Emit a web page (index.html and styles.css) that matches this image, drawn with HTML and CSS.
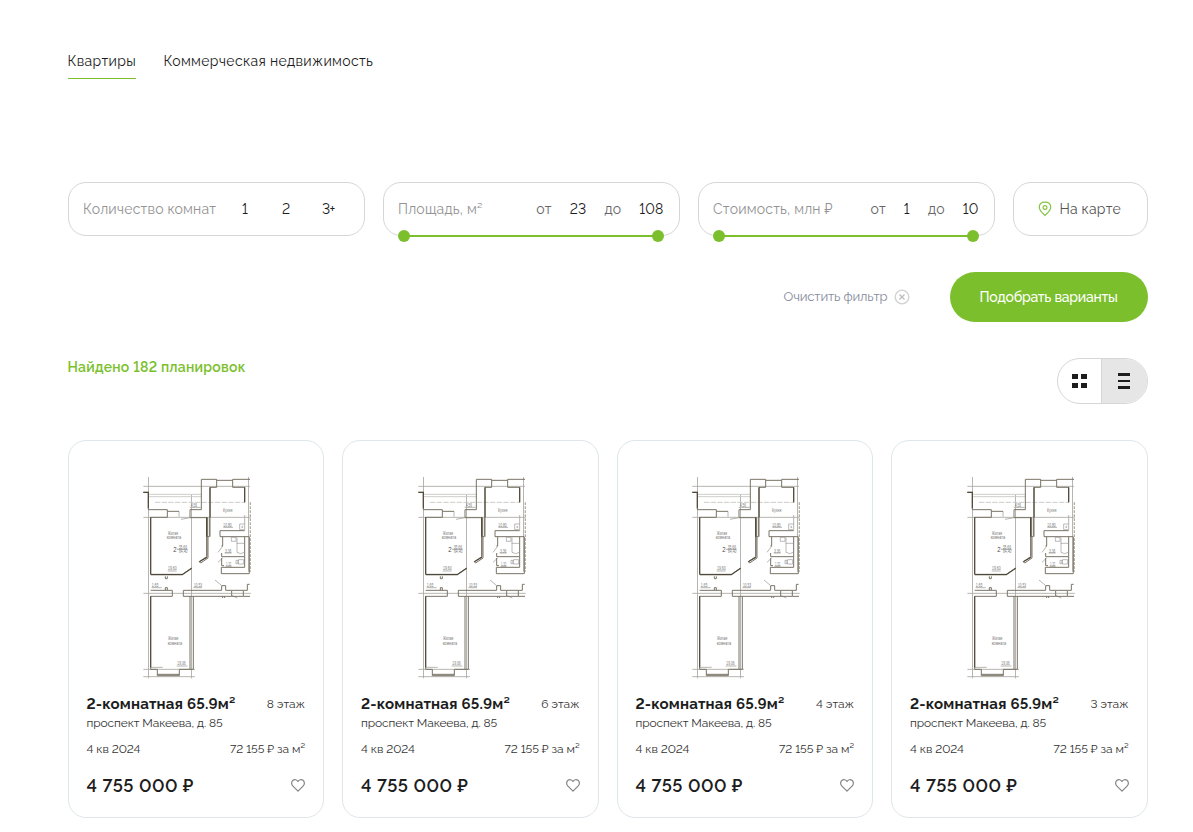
FILE: index.html
```html
<!DOCTYPE html>
<html lang="ru">
<head>
<meta charset="utf-8">
<title>Квартиры</title>
<link rel="stylesheet" href="styles.css">
</head>
<body>
<svg class="sprite" aria-hidden="true">
  <symbol id="plan" viewBox="0 0 405 660">
    <g fill="none" stroke="#aaa9a5" stroke-width="2.6">
      <path d="M55.5 36V640M184.500 89V640M355.500 36V320M40 64H360M40 157H362M40 385H362M40 613H195M40 635H195"/>
      <path d="M75 112H345" stroke="#c4c4c0" stroke-dasharray="16 4"/>
      <path d="M55 88H214M55 95H214" stroke="#c6c6c2"/>
      <path d="M361 112V320" stroke="#b5afa2" stroke-width="4" stroke-dasharray="8 4"/>
      <path d="M344 150V196M147 139V155M153 163L180 158M264 262L278 244M264 292L278 279M255 345L274 361M306 392L322 399M179 127H212M280 187H309M284 264H305M287 304H305M113 318H140M65 368H95M190 368H216M140 603H172M63 607H98"/>
    </g>
    <g fill="none" stroke="#7a7466" stroke-width="3">
      <path d="M40 82H55V134H112V157M112 139H147M180 157V134H214V43H260V67H240V215M260 46H308M308 43H360M308 43V67H344V112M232 157V215M238 157V215H231V275"/>
      <path d="M180 158H230V275L208 290L212 294L234 279V215M62 157V328M62 157H112M344 197H270V215H357M344 215V275H275V264M278 215V243H274M275 279V302H282M344 275V307H274V326H358V215"/>
      <path d="M62 328H157L185 309M106 334V341H112V334M106 376V368H112V376M62 376H127V394H62M160 376H275V362H287V376H305V394H160ZM305 376H340V394H305M340 394H360M340 376H352V358H359M278 394V399M284 394V399"/>
      <path d="M62 394V613M180 394V613M190 394V613M62 613H82V632H148V613H190M82 628H148"/>
    </g>
    <g fill="none" stroke="#4f4939" stroke-width="3.5">
      <path d="M240 67V157M344 67V112M62 157V328M62 329H157L185 310M230 157V215M62 394V607M231 277L208 290M40 82H55V130"/>
    </g>
    <g fill="none" stroke="#999" stroke-width="2">
      <path d="M344 177H329V194H342M304 217H318V229H304ZM321 217V262Q333 270 342 262M320 235H342M318 286H325V296H318ZM326 284H341V297H326Q320 291 326 284"/>
      <circle cx="337" cy="186" r="2"/>
    </g>
    <g class="plan-text">
      <text x="279" y="140" textLength="28" lengthAdjust="spacingAndGlyphs">Кухня</text>
      <text x="113" y="209" textLength="31" lengthAdjust="spacingAndGlyphs">Жилая</text>
      <text x="110" y="223" textLength="43" lengthAdjust="spacingAndGlyphs">комната</text>
      <text class="plan-num" x="130" y="261" textLength="10" lengthAdjust="spacingAndGlyphs">2</text>
      <text x="146" y="252" textLength="25" lengthAdjust="spacingAndGlyphs">35,66</text>
      <path d="M141 253H173" stroke="#888" stroke-width="2"/>
      <text x="147" y="265" textLength="25" lengthAdjust="spacingAndGlyphs">64,40</text>
      <text x="114" y="316" textLength="26" lengthAdjust="spacingAndGlyphs">19,60</text>
      <text x="183" y="126" textLength="18" lengthAdjust="spacingAndGlyphs">4,56</text>
      <text x="280" y="186" textLength="25" lengthAdjust="spacingAndGlyphs">10,80</text>
      <text x="285" y="263" textLength="19" lengthAdjust="spacingAndGlyphs">3,36</text>
      <text x="288" y="302" textLength="16" lengthAdjust="spacingAndGlyphs">1,32</text>
      <text x="65" y="366" textLength="20" lengthAdjust="spacingAndGlyphs">1,65</text>
      <text x="192" y="366" textLength="24" lengthAdjust="spacingAndGlyphs">10,53</text>
      <text x="114" y="525" textLength="31" lengthAdjust="spacingAndGlyphs">Жилая</text>
      <text x="113" y="540" textLength="43" lengthAdjust="spacingAndGlyphs">комната</text>
      <text x="142" y="601" textLength="25" lengthAdjust="spacingAndGlyphs">19,06</text>
    </g>
  </symbol>
  <symbol id="heart" viewBox="0 0 14 13">
    <path d="M7 12.200L1.700 6.800C.1 5.100.4 2.500 2 1.300C3.700.1 5.900.6 7 2.500C8.100.6 10.300.1 12 1.300C13.600 2.500 13.900 5.100 12.300 6.800Z" fill="none" stroke="#858585" stroke-width="1.200" stroke-linejoin="round"/>
  </symbol>
</svg>

<main class="page">
  <nav class="tabs">
    <a class="tab tab-active">Квартиры</a>
    <a class="tab">Коммерческая недвижимость</a>
  </nav>

  <section class="filters">
    <div class="field">
      <span class="label rooms-label">Количество комнат</span>
      <span class="room">1</span><span class="room">2</span><span class="room">3<span class="plus">+</span></span>
    </div>
    <div class="field">
      <span class="label">Площадь, м²</span>
      <span class="range"><span class="word">от</span><span class="value">23</span><span class="word">до</span><span class="value">108</span></span>
      <span class="slider"></span>
    </div>
    <div class="field">
      <span class="label">Стоимость, млн ₽</span>
      <span class="range"><span class="word">от</span><span class="value">1</span><span class="word">до</span><span class="value">10</span></span>
      <span class="slider"></span>
    </div>
    <div class="field map">
      <svg class="pin" viewBox="0 0 14 16"><path d="M7 14.500C5.800 12.900 1.500 10.400 1.300 6.200C1.300 3 3.600 1.200 7 1.200S12.700 3 12.700 6.200C12.500 10.400 8.200 12.900 7 14.500Z" fill="none" stroke="#84c441" stroke-width="1.200"/><circle cx="7" cy="6.500" r="1.900" fill="none" stroke="#84c441" stroke-width="1.200"/></svg>
      <span>На карте</span>
    </div>
  </section>

  <div class="actions">
    <span class="clear"><span>Очистить фильтр</span>
      <svg class="clear-icon" viewBox="0 0 16 16"><circle cx="8" cy="8" r="6.800" fill="none" stroke="#d2d2d2" stroke-width="1.300"/><path d="M5.500 5.500L10.500 10.500M10.500 5.500L5.500 10.500" stroke="#bdbdbd" stroke-width="1.300"/></svg>
    </span>
    <button class="submit">Подобрать варианты</button>
  </div>

  <div class="results">
    <span class="found">Найдено 182 планировок</span>
    <div class="toggle">
      <span class="view view-grid"><svg width="15" height="14" viewBox="0 0 15 14"><path d="M0 0H6V5H0ZM9 0H15V5H9ZM0 9H6V14H0ZM9 9H15V14H9Z" fill="#1d1d1d"/></svg></span>
      <span class="view view-list"><svg width="12" height="16" viewBox="0 0 12 16"><path d="M0 0H12V3H0ZM0 7H12V9H0ZM0 13H12V16H0Z" fill="#1d1d1d"/></svg></span>
    </div>
  </div>

  <section class="cards">
    <article class="card">
      <svg class="plan"><use href="#plan"/></svg>
      <div class="row title-row"><h3 class="title">2-комнатная 65.9м²</h3><span>8 этаж</span></div>
      <p class="address">проспект Макеева, д. 85</p>
      <div class="row term-row"><span>4 кв 2024</span><span>72 155 ₽ за м²</span></div>
      <div class="row price-row"><strong class="price">4 755 000 ₽</strong><svg class="heart"><use href="#heart"/></svg></div>
    </article>
    <article class="card">
      <svg class="plan"><use href="#plan"/></svg>
      <div class="row title-row"><h3 class="title">2-комнатная 65.9м²</h3><span>6 этаж</span></div>
      <p class="address">проспект Макеева, д. 85</p>
      <div class="row term-row"><span>4 кв 2024</span><span>72 155 ₽ за м²</span></div>
      <div class="row price-row"><strong class="price">4 755 000 ₽</strong><svg class="heart"><use href="#heart"/></svg></div>
    </article>
    <article class="card">
      <svg class="plan"><use href="#plan"/></svg>
      <div class="row title-row"><h3 class="title">2-комнатная 65.9м²</h3><span>4 этаж</span></div>
      <p class="address">проспект Макеева, д. 85</p>
      <div class="row term-row"><span>4 кв 2024</span><span>72 155 ₽ за м²</span></div>
      <div class="row price-row"><strong class="price">4 755 000 ₽</strong><svg class="heart"><use href="#heart"/></svg></div>
    </article>
    <article class="card">
      <svg class="plan"><use href="#plan"/></svg>
      <div class="row title-row"><h3 class="title">2-комнатная 65.9м²</h3><span>3 этаж</span></div>
      <p class="address">проспект Макеева, д. 85</p>
      <div class="row term-row"><span>4 кв 2024</span><span>72 155 ₽ за м²</span></div>
      <div class="row price-row"><strong class="price">4 755 000 ₽</strong><svg class="heart"><use href="#heart"/></svg></div>
    </article>
  </section>
</main>
</body>
</html>
```
FILE: styles.css
```css
* { box-sizing: border-box; }
body {
  margin: 0;
  background: #fff;
  color: #1d1d1d;
  font-family: Raleway, Lato, "Open Sans", sans-serif;
  font-variant-numeric: lining-nums;
  font-size: 14px;
  line-height: 20px;
  white-space: nowrap;
  overflow: hidden;
}
.sprite { display: none; }
.page { width: 1080px; margin-left: 67.5px; padding-top: 51px; }

.tabs { display: flex; gap: 27.5px; height: 131px; align-items: flex-start; letter-spacing: 0.34px; }
.tab { height: 28px; }
.tab-active { border-bottom: 1px solid #7bbf2c; width: 68.5px; }

.filters { display: grid; grid-template-columns: 297px 297px 297px 135px; gap: 18px; letter-spacing: 0.2px; }
.field {
  position: relative;
  display: flex;
  align-items: center;
  height: 54px;
  padding: 0 15px 0 14.5px;
  border: 1px solid #d6d6d6;
  border-radius: 18px;
}
.label { color: #939393; }
.rooms-label { width: 159px; flex: none; }
.room { width: 40px; flex: none; }
.plus { font-size: 14px; margin-left: -1px; }
.range { display: flex; gap: 18px; margin-left: auto; }
.word { color: #666; }
.slider {
  position: absolute;
  left: 20px;
  right: 21px;
  bottom: -2px;
  height: 2px;
  background: #7bbf2c;
}
.slider::before, .slider::after {
  content: "";
  position: absolute;
  top: -5px;
  width: 12px;
  height: 12px;
  border-radius: 50%;
  background: #7bbf2c;
}
.slider::before { left: -6px; }
.slider::after { right: -6px; }
.map { padding: 0 0 0 24px; gap: 8px; color: #555; }
.pin { width: 14px; height: 16px; }

.actions { display: flex; justify-content: flex-end; align-items: center; gap: 40px; margin-top: 36px; height: 50px; }
.clear { display: flex; align-items: center; gap: 6px; color: #858b9b; font-size: 13px; letter-spacing: -0.13px; }
.clear-icon { width: 16px; height: 16px; }
.submit {
  width: 198px;
  height: 50px;
  border: 0;
  border-radius: 25px;
  background: #7bbf2c;
  color: #fff;
  font: inherit;
  font-weight: 500;
  letter-spacing: -0.25px;
  padding: 0;
}

.results { display: flex; justify-content: space-between; align-items: flex-start; margin-top: 36px; height: 46px; }
.found { color: #7bbf2c; font-weight: 600; line-height: 18px; letter-spacing: 0.24px; }
.toggle { display: flex; width: 91px; height: 46px; border: 1px solid #d6d6d6; border-radius: 23px; overflow: hidden; }
.view { display: flex; align-items: center; justify-content: center; }
.view-grid { width: 44px; border-right: 1px solid #d6d6d6; }
.view-list { flex: 1; background: #e6e6e6; }

.cards { display: grid; grid-template-columns: repeat(4, 256.5px); gap: 18px; margin-top: 36px; }
.card { height: 378px; border: 1px solid #dde6e9; border-radius: 18px; padding: 24px 18px 0; font-size: 12px; color: #333; }
.plan { display: block; width: 135px; height: 220px; margin-left: 43.5px; }
.plan-text { font-family: "Liberation Sans", sans-serif; font-size: 14px; fill: #777; }
.plan-num { font-size: 22px; fill: #444; }
.row { display: flex; justify-content: space-between; align-items: center; letter-spacing: -0.06px; }
.title-row { height: 20px; margin-top: 9px; }
.title { margin: 0; font-size: 15px; font-weight: 700; color: #1d1d1d; letter-spacing: 0.18px; }
.address { margin: 0; height: 18px; line-height: 18px; letter-spacing: -0.11px; }
.term-row { margin-top: 7px; height: 20px; }
.price-row { margin-top: 16px; height: 22px; }
.price { font-size: 18px; font-weight: 600; color: #1d1d1d; letter-spacing: 0.5px; }
.heart { width: 14px; height: 13px; margin-bottom: 2px; }
```
